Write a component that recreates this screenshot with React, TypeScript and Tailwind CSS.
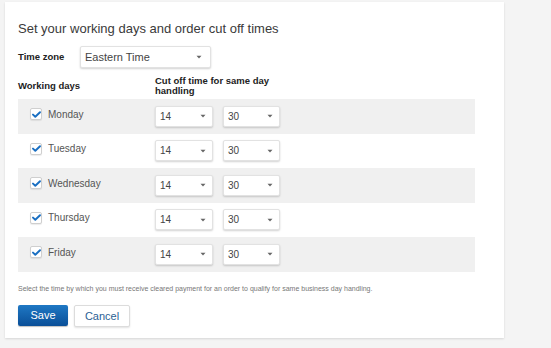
import React from 'react';

const days = ['Monday', 'Tuesday', 'Wednesday', 'Thursday', 'Friday'];

function Caret() {
  return (
    <svg width="6" height="4" viewBox="0 0 6 4" className="shrink-0">
      <path d="M0.5 0.8 L5.5 0.8 L3 3.4 Z" fill="#666" />
    </svg>
  );
}

function Select({ value, className }: { value: string; className: string }) {
  return (
    <div
      className={`flex items-center justify-between bg-white border border-[#e2e2e2] rounded-[2px] shadow-[0_1px_2px_rgba(0,0,0,0.18)] text-[#444] ${className}`}
    >
      <span>{value}</span>
      <Caret />
    </div>
  );
}

function Check() {
  return (
    <div className="w-[12px] h-[12px] bg-white border border-[#cfcfcf] rounded-[2px] flex items-center justify-center shadow-[0_1px_1px_rgba(0,0,0,0.08)]">
      <svg width="9" height="7" viewBox="0 0 9 7">
        <path d="M1 3.6 L3.3 5.8 L8 1.2" stroke="#1a6fc2" strokeWidth="1.9" fill="none" strokeLinecap="round" strokeLinejoin="round" />
      </svg>
    </div>
  );
}

export default function App() {
  return (
    <div className="w-[551px] h-[348px] bg-[#f4f4f4] pt-[2px] pl-[5px] font-['Liberation_Sans',Arial,sans-serif] overflow-hidden">
      <div className="w-[499px] h-[336px] bg-white shadow-[0_1px_2px_rgba(0,0,0,0.12)] pl-[13px] pt-[18px]">
        <h1 className="text-[13px] leading-[18px] text-[#3a3a3a]">Set your working days and order cut off times</h1>

        {/* Time zone */}
        <div className="flex items-center mt-[8px] h-[22px]">
          <span className="w-[62px] text-[9.5px] font-bold text-[#222]">Time zone</span>
          <Select value="Eastern Time" className="w-[131px] h-[22px] pl-[4px] pr-[8px] text-[11px]" />
        </div>

        {/* Headers */}
        <div className="flex items-start mt-[9px] h-[20px] text-[9.5px] font-bold text-[#222]">
          <span className="w-[137px] mt-[2px]">Working days</span>
          <span className="w-[120px] leading-[10px] -mt-[1px]">Cut off time for same day handling</span>
        </div>

        {/* Day rows */}
        <div className="w-[457px] mt-[2px]">
          {days.map((d, i) => (
            <div key={d} className={`flex items-center h-[34.5px] ${i % 2 === 0 ? 'bg-[#f0f0f0]' : 'bg-white'}`}>
              <div className="flex items-center w-[137px] pl-[12px] -mt-[4px]">
                <Check />
                <span className="ml-[6px] text-[10px] text-[#555]">{d}</span>
              </div>
              <Select value="14" className="w-[58px] h-[21px] pl-[4px] pr-[6px] text-[10px]" />
              <Select value="30" className="w-[57px] h-[21px] pl-[4px] pr-[6px] text-[10px] ml-[10px]" />
            </div>
          ))}
        </div>

        <p className="mt-[12px] text-[7px] text-[#777]">
          Select the time by which you must receive cleared payment for an order to qualify for same business day handling.
        </p>

        <div className="flex mt-[11px] gap-[6px]">
          <button className="w-[50px] h-[21px] rounded-[2px] bg-gradient-to-b from-[#1f78c4] to-[#0a4f98] text-white text-[11px] shadow-[0_1px_1px_rgba(0,0,0,0.25)]">
            Save
          </button>
          <button className="w-[56px] h-[22px] rounded-[2px] bg-white border border-[#dcdcdc] text-[#2b5f94] text-[11px] shadow-[0_1px_2px_rgba(0,0,0,0.12)]">
            Cancel
          </button>
        </div>
      </div>
    </div>
  );
}
